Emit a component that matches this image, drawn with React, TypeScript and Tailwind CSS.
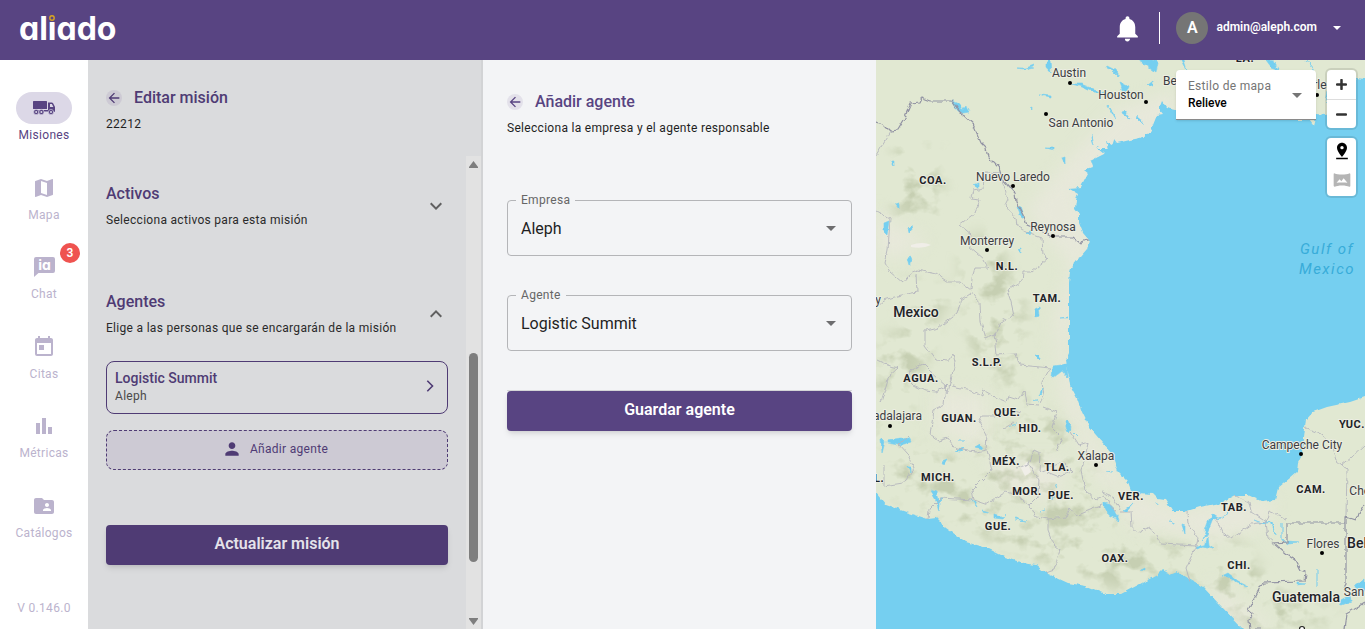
import React, { useState } from 'react';
import {
  MdArrowBack,
  MdBarChart,
  MdExpandLess,
  MdExpandMore,
  MdFolderShared,
  MdMap,
  MdNotifications,
  MdPerson,
  MdPinDrop,
  MdToday,
  MdVrpano,
} from 'react-icons/md';

function TruckIcon() {
  return (
    <svg width="23" height="14" viewBox="0 0 23 14" fill="currentColor" aria-hidden="true">
      <rect x="0" y="0" width="14" height="8" rx="0.6" />
      <path d="M15 1.5h3.8c.6 0 1 .3 1.300.8l1.700 3.200.2.500v4.800h-1.400a2.600 2.600 0 0 0-5 0H15z" />
      <path d="M17 3h1.900l1.500 3H17z" fill="#dcd8e7" />
      <path d="M1 9h14v1.500H1z" />
      <g stroke="#dcd8e7" strokeWidth="0.6">
        <circle cx="3.200" cy="11" r="2.600" />
        <circle cx="8.400" cy="11" r="2.600" />
        <circle cx="18" cy="11" r="2.600" />
      </g>
      <g fill="#dcd8e7">
        <circle cx="3.200" cy="11" r="1" />
        <circle cx="8.400" cy="11" r="1" />
        <circle cx="18" cy="11" r="1" />
      </g>
    </svg>
  );
}

function ChatIaIcon() {
  return (
    <svg width="21" height="20" viewBox="0 0 21 20" aria-hidden="true">
      <path d="M2 0h17a2 2 0 0 1 2 2v12a2 2 0 0 1-2 2H4.500L0 20V2a2 2 0 0 1 2-2z" fill="currentColor" />
      <text x="10.500" y="13" textAnchor="middle" className="fill-white font-[Inter] text-[14px] font-bold [font-feature-settings:'cv11']">ia</text>
    </svg>
  );
}

function Caret({ className }: { className: string }) {
  return (
    <svg width="10" height="5" viewBox="0 0 10 5" className={className} aria-hidden="true">
      <path d="M0 0h10L5 5z" fill="currentColor" />
    </svg>
  );
}

const NAV = [
  { label: 'Misiones', icon: <TruckIcon />, active: true },
  { label: 'Mapa', icon: <MdMap size={24} /> },
  { label: 'Chat', icon: <ChatIaIcon />, badge: 3 },
  { label: 'Citas', icon: <MdToday size={24} /> },
  { label: 'Métricas', icon: <MdBarChart size={24} /> },
  { label: 'Catálogos', icon: <MdFolderShared size={24} /> },
];

function Header() {
  return (
    <header className="flex h-15 shrink-0 items-center justify-between bg-[#584482] pl-[19px] pr-6 text-white">
      <a href="#" className="relative mb-0.5 block font-[Inter] text-[32px] font-bold leading-[50px] [font-feature-settings:'cv11']">
        aliado
        <svg width="8" height="8" viewBox="0 0 8 8" className="absolute left-[29px] top-[10px]" aria-hidden="true">
          <rect width="8" height="8" fill="#584482" />
          <circle cx="4" cy="4" r="2.200" fill="none" stroke="#d9a520" strokeWidth="1.400" />
        </svg>
      </a>
      <div className="flex items-center pb-1">
        <button type="button" aria-label="Notificaciones">
          <MdNotifications size={31} />
        </button>
        <span className="ml-4 h-8 w-px bg-white" />
        <button type="button" className="ml-4 flex items-center text-xs font-semibold">
          <span className="flex size-8 items-center justify-center rounded-full bg-[#757575] text-base font-semibold">A</span>
          <span className="mb-0.5 ml-2">admin@aleph.com</span>
          <svg width="8" height="4" viewBox="0 0 8 4" className="ml-4" aria-hidden="true">
            <path d="M0 0h8L4 4z" fill="currentColor" />
          </svg>
        </button>
      </div>
    </header>
  );
}

function Sidebar() {
  return (
    <aside className="flex w-22 shrink-0 flex-col bg-white text-xs">
      <nav className="flex flex-1 flex-col items-center justify-between pt-8">
        {NAV.map((n) => (
          <a key={n.label} href="#" className={`flex flex-col items-center ${n.active ? 'text-[#584482]' : 'text-[#bbb3cd]'}`}>
            <span className={`relative flex h-8 w-14 items-center justify-center rounded-full ${n.active ? 'bg-[#dcd8e7]' : ''}`}>
              {n.icon}
              {n.badge && (
                <span className="absolute -right-2 -top-2 flex size-5 items-center justify-center rounded-full bg-[#ef5350] font-semibold text-white">
                  {n.badge}
                </span>
              )}
            </span>
            <span className="mt-[3px] leading-4 tracking-wide">{n.label}</span>
          </a>
        ))}
      </nav>
      <p className="pb-[13px] pt-[59px] text-center leading-4 tracking-wide text-[#bbb3cd]">V 0.146.0</p>
    </aside>
  );
}

function PanelTitle({ title, subtitle, circle }: { title: string; subtitle: string; circle: string }) {
  return (
    <div>
      <div className="flex items-center gap-3">
        <button type="button" aria-label="Volver" className={`flex size-4 items-center justify-center rounded-full ${circle}`}>
          <MdArrowBack size={16} />
        </button>
        <h2 className="text-base font-medium leading-6">{title}</h2>
      </div>
      <p className="mt-1 text-xs leading-5 tracking-wide text-[#1f1f1f]">{subtitle}</p>
    </div>
  );
}

function Section({ title, subtitle, open }: { title: string; subtitle: string; open?: boolean }) {
  return (
    <button type="button" aria-expanded={!!open} className="flex w-full items-center justify-between text-left">
      <span className="flex flex-col">
        <span className="text-base font-medium leading-6">{title}</span>
        <span className="mt-1 text-xs leading-5 tracking-wide text-[#2a2a2a]">{subtitle}</span>
      </span>
      <span className="text-[#606060]">{open ? <MdExpandLess size={24} /> : <MdExpandMore size={24} />}</span>
    </button>
  );
}

function MissionPanel() {
  return (
    <section className="flex w-[395px] shrink-0 flex-col border-r-2 border-[#d2d3d5] bg-[#dadbdd] text-[#4f3b74]">
      <div className="h-24 px-[18px] pt-[26px]">
        <PanelTitle title="Editar misión" subtitle="22212" circle="bg-[#cdcad4]" />
      </div>
      <div className="flex min-h-0 flex-1">
        <div className="flex-1 px-[18px] pt-[26px]">
          <Section title="Activos" subtitle="Selecciona activos para esta misión" />
          <div className="mt-[60px]">
            <Section title="Agentes" subtitle="Elige a las personas que se encargarán de la misión" open />
          </div>
          <button type="button" className="mt-[23px] flex w-full items-center justify-between rounded-lg border border-[#4f3b74] pb-[9px] pl-2 pr-[13px] pt-1.5 text-left">
            <span className="flex flex-col">
              <span className="text-sm font-medium leading-5">Logistic Summit</span>
              <span className="text-xs leading-4 tracking-wide text-[#4a4a4a]">Aleph</span>
            </span>
            <svg width="8" height="12" viewBox="0 0 8 12" fill="none" stroke="currentColor" strokeWidth="1.600" aria-hidden="true">
              <path d="M1.300.8 6.500 6l-5.200 5.200" />
            </svg>
          </button>
          <button type="button" className="mt-4 flex h-10 w-full items-center justify-center gap-2 rounded-lg border border-dashed border-[#4f3b74] bg-[#cdcad4] pb-0.5 pr-1 text-xs tracking-wide">
            <MdPerson size={20} />
            Añadir agente
          </button>
          <button type="button" className="mt-[55px] h-10 w-full rounded bg-[#4f3b74] pb-0.5 text-base font-semibold text-[#e4e2ea] shadow-md">
            Actualizar misión
          </button>
        </div>
        <div className="flex w-[15px] flex-col items-center bg-[#e2e2e2] text-[#7e7e7e]">
          <svg width="9" height="7" viewBox="0 0 9 7" className="mt-[5px]" aria-hidden="true">
            <path d="M4.500 0 9 6v1H0V6z" fill="currentColor" />
          </svg>
          <div className="grow-[185]" />
          <div className="w-[9px] grow-[209] rounded-full bg-current" />
          <div className="grow-[56]" />
          <svg width="9" height="7" viewBox="0 0 9 7" className="mb-1" aria-hidden="true">
            <path d="M4.500 7 9 1V0H0v1z" fill="currentColor" />
          </svg>
        </div>
      </div>
    </section>
  );
}

interface FieldProps {
  id: string;
  label: string;
  options: string[];
}

function OutlinedSelect({ id, label, options }: FieldProps) {
  const [value, setValue] = useState(options[0]);
  return (
    <div className="relative">
      <label htmlFor={id} className="absolute -top-2 left-[9px] bg-[#f3f4f6] px-[5px] text-xs leading-4 tracking-wide text-[#666]">
        {label}
      </label>
      <select
        id={id}
        value={value}
        onChange={(e) => setValue(e.target.value)}
        className="h-14 w-full appearance-none rounded border border-[#b4b5b8] bg-transparent pl-[13px] pr-10 pt-0.5 text-base text-[#1f1f1f]"
      >
        {options.map((o) => <option key={o}>{o}</option>)}
      </select>
      <Caret className="pointer-events-none absolute right-4 top-[26px] text-[#6d6d6f]" />
    </div>
  );
}

function AgentPanel() {
  return (
    <section className="flex w-[393px] shrink-0 flex-col bg-[#f3f4f6] px-6 pt-[30px] text-[#584482]">
      <PanelTitle title="Añadir agente" subtitle="Selecciona la empresa y el agente responsable" circle="bg-[#e3e1ea]" />
      <form className="mt-[62px] flex flex-col gap-[39px]" onSubmit={(e) => e.preventDefault()}>
        <OutlinedSelect id="empresa" label="Empresa" options={['Aleph']} />
        <OutlinedSelect id="agente" label="Agente" options={['Logistic Summit']} />
        <div className="border-t border-[#d5d6d8]">
          <button type="submit" className="h-10 w-full rounded bg-[#584482] pb-0.5 text-base font-semibold text-white shadow-md">
            Guardar agente
          </button>
        </div>
      </form>
    </section>
  );
}

type Label = [string, number, number];

const CITIES: Label[] = [
  ['Austin', 193, 17], ['Houston', 245, 39], ['Be', 294, 25], ['San Antonio', 205, 67], ['Nuevo Laredo', 137, 121],
  ['Monterrey', 111, 185], ['Reynosa', 177, 171], ['Guadalajara', 14, 360], ['Xalapa', 220, 400],
  ['Campeche City', 426, 389], ['Flores', 447, 488], ['New Orleans', 436, 29], ['Chetumal', 499, 435], ['y', 2, 244],
  ['San', 478, 536],
];
const STATES: Label[] = [
  ['COA.', 57, 124], ['N.L.', 131, 210], ['TAM.', 171, 242], ['S.L.P.', 111, 306], ['AGUA.', 45, 322],
  ['GUAN.', 83, 362], ['QUE.', 131, 356], ['HID.', 154, 372], ['MÉX.', 130, 405], ['TLA.', 181, 411],
  ['MICH.', 62, 421], ['MOR.', 151, 435], ['PUE.', 185, 439], ['GUE.', 122, 470], ['L.', 3, 422],
  ['VER.', 255, 440], ['OAX.', 239, 502], ['TAB.', 358, 451], ['CAM.', 435, 433], ['YUC.', 476, 368],
  ['CHI.', 363, 509], ['LA.', 369, 2],
];
const COUNTRIES: Label[] = [['Mexico', 40, 257], ['Guatemala', 430, 542], ['Belize', 490, 488]];
const DOTS = [
  [194, 23], [270, 42], [170, 54], [137, 126], [111, 190], [177, 176], [14, 366], [220, 405], [425, 394], [446, 493], [441, 35],
];

const GULF =
  'M500 19 489 19 480 18 474 30 466 38 459 50 450 55 440 54 437 65 433 60 420 60 400 56 370 50 330 52 299 49 290 47 286 41 283 49 287 54 281 55 277 65 274 73 264 78 254 80 241 83 238 79 236 85 230 82 232 89 222 89 228 94 214 101 216 107 207 110 212 114 205 127 192 128 202 134 200 140 199 148 203 153 203 163 207 173 213 180 211 190 205 197 197 202 194 212 193 223 193 285 193 293 190 300 192 312 194 325 201 338 206 352 214 368 226 382 236 393 242 412 252 422 255 430 261 433 277 434 282 439 289 440 296 451 311 451 324 447 344 443 359 435 372 435 387 442 399 440 402 428 414 418 421 412 422 402 427 392 428 378 430 360 437 352 451 347 474 342 489 337 500 334Z';
const PACIFIC =
  'M-5 428 0 433 10 445 30 452 52 459 60 458 70 468 90 482 110 488 128 497 147 503 160 505 170 513 192 523 210 526 230 534 245 534 264 524 281 515 286 510 294 515 301 512 311 518 327 527 344 545 367 569 370 580 -5 580Z';
const LAKES = [
  'M141 8l8 1 8-2 1-2-8 3zM171 0v8l4 5-1-13zM230 8l7 3 6 6-4-7-8-4zM163 35l6 2 5 1v-2l-9-1zM196 24l10 3 11 5 14 1-14-4-12-5z',
  'M76 41l6 10 5 2-3-8zM86 50l4-5 1 4 2 3-6 1zM15 101l3 5v-5zM154 48l2 2v-3zM97 125l5 3v-5zM20 144l3 4v-5zM170 88l8 2v-2zM186 98l3 6v-7z',
  'M8 163l5-2-2 13-3-3zM32 168l3-3 1 5-3 3zM31 198l5-1 1 5-4 3zM141 147l4 10 3 2-4-13zM150 172l6-1-2 5zM141 189l4 3v-4zM159 249l4-2 1 9-5 1z',
  'M184 258l8-1v1zM11 380l22-3 2 5-12 3-12-2zM5 378l4 4-3 11zM31 407l3 5v-5zM66 402l5-2-3 5zM78 391l10-3-3 4zM83 381l5 0zM99 387l5-3 2 5zM54 430l7 2 2 8 5-3-5 5v9l-3-11z',
  'M95 440l6 7-3-6zM118 455l10 3 2-4-3 5-9-1zM138 458l12 3-11-2zM105 450l8 2-7-1zM160 295l4 4v-4zM177 306l14-2 1 14-6-7-10 8zM166 333l-3 3 3-8zM158 339l4 3zM133 367l7-2zM189 362l3 11 3-5-3-7zM197 372l5 5-5-5z',
  'M228 443l8 2 6 15-9-5-5-9zM230 411l7 1-6-1zM179 424l2 4zM164 452l5-2zM176 440l2-6zM248 451l10-8-7 8zM306 465l3 9v-8zM293 461l6 2zM279 442l4 2z',
  'M327 480l3-12 5-14 6 4 7-1 8-10-9 11-10 1-7 18zM319 487l10-1 3-9 1 9 5 3-11-2-7 3zM346 516l6-3 10 8 10 5-12-3-8-7zM265 510l4-2v3zM378 460l10 4 8-2 3 13-5-13-8 1zM406 480v-16 15l6 6zM411 481l12 1-12 1zM441 510v17-16zM463 541l11-6 1 6-10 4zM478 526l11-7v12l-10-3zM421 523l8 1-8 1z',
  'M244 22l6 16 3-12zM262 0l10 6 8 6 2-10-12-4zM306 0l5 10-3-10zM390 0l6 8 6 2-5-9zM430 0l7 9 4 12-5-13zM452 32l10 4-4 10-8-5zM247 50l7 9-8-6zM262 55l6 10-7-7zM277 20l-5 4 5 2zM215 75l2 10-2-7zM220 90l2-4zM232 46l6 7 2 6-5-8z',
];
const STATE_LINES =
  'M15 71 0 95M0 151 14 159 12 190 9 203 14 212 27 223 36 212 42 210 60 214 72 222 84 222 95 230 96 218 99 208 112 208 107 198 93 186 95 175 83 165 99 153 104 140 95 139 97 130 108 128 110 112 125 113M40 214 41 232 22 236 8 240 0 247M97 232 85 240 81 253 62 268 49 271 49 285 60 300 72 301 77 294 79 302 74 324 71 334 70 325 68 345 58 350 54 375 62 381 72 378 80 389 100 392 110 390 111 375 103 362 106 356 122 356 133 348 145 352M97 234 104 243 105 262 110 278 119 274 121 285M125 113 132 140 129 146 140 158 141 166 155 174 166 178 167 195 172 198 155 212 147 212 146 221 131 230 135 242 138 255 124 262 119 275M119 285 120 295 140 294 144 305 174 308 166 323 168 335 163 345 150 344 148 331 142 339 133 336 131 342 121 338 107 330 106 337 95 330 76 326M71 326 60 332 50 331 37 325 30 318 36 309 47 304 55 312 62 318 71 326M0 300 8 304 22 308 13 316 5 342M168 347 181 352 176 368 186 378 181 390M194 371 203 385 212 382 210 395 205 410 209 430 220 440 228 435 240 452M127 369 137 363M111 390 116 410 96 430 98 440 110 444 130 432 141 435 153 445 162 436 163 420 153 404 141 408M153 404 158 390 164 393 163 412 175 407 187 402 197 412 181 416 171 412M52 459 53 450 65 438 97 440M33 375 23 385 32 395 38 408 27 423 8 426 8 405M153 445 160 457 172 459 172 470 178 485 184 490 178 510 170 513M172 459 190 457 194 448 200 456 226 445M244 452 255 452 256 467 263 473 274 467 285 484 320 486 322 478 312 464 311 451M320 486 310 508 314 522M340 458 346 472 355 479 365 472 376 464 390 462 393 451 411 459M359 435 373 442 375 452 390 462 392 478 397 482M430 368 445 374 455 385 460 400 471 409 470 456M466 405 475 398 489 385M226 432 236 436 244 450';
const BORDERS =
  'M0 62 7 64 14 71 22 70 28 60 35 43 44 42 46 38 54 41 76 41 84 52 97 64 105 83 110 88 112 97 123 108 126 118 134 127 139 133 140 142 147 155 151 165 163 170 177 177 196 177 205 184 207 181 213 180M386 569 374 569 373 560 376 553 372 550 387 522 429 521 430 512 424 510 419 500 410 494 397 483 411 482 411 463 470 463 470 457 479 460 489 444M470 463 470 525 467 530M489 543 470 554 468 569';

function MapView() {
  return (
    <div className="relative min-w-0 flex-1 overflow-hidden bg-[#e1e8d2]">
      <svg viewBox="0 0 489 569" preserveAspectRatio="xMaxYMid slice" className="absolute inset-0 size-full font-[Roboto]" role="img" aria-label="Mapa">
        <defs>
          <filter id="rough" x="0" y="0" width="100%" height="100%" colorInterpolationFilters="sRGB">
            <feTurbulence type="fractalNoise" baseFrequency="0.15" numOctaves="2" seed="4" />
            <feDisplacementMap in="SourceGraphic" scale="5" xChannelSelector="R" yChannelSelector="G" />
          </filter>
          <filter id="relief" x="0" y="0" width="100%" height="100%" colorInterpolationFilters="sRGB">
            <feTurbulence type="fractalNoise" baseFrequency="0.035 0.045" numOctaves="4" seed="9" result="n" />
            <feColorMatrix in="n" values="0 0 0 0 0.720  0 0 0 0 0.760  0 0 0 0 0.630  5 0 0 0 -2.500" result="c" />
            <feGaussianBlur in="SourceAlpha" stdDeviation="8" result="b" />
            <feComposite in="c" in2="b" operator="in" />
          </filter>
          <filter id="soft" colorInterpolationFilters="sRGB"><feGaussianBlur stdDeviation="8" /></filter>
        </defs>
        <rect width="489" height="569" fill="#e1e8d2" />
        <g filter="url(#soft)" fill="#e7e8da">
          <path d="M200 90 240 50 300 30 300 90 200 130 215 180 190 290 215 370 250 430 225 425 185 340 178 260 195 205 150 150z" />
          <path d="M0 150 30 170 50 180 20 200 0 190zM60 330 110 335 110 390 60 370zM244 425 300 450 400 440 390 465 340 480 250 465z" />
          <path d="M110 400 190 400 180 440 130 430zM330 520 400 569 350 569z" />
        </g>
        <g filter="url(#relief)" opacity="0.650">
          <path d="M20 80 60 90 70 160 20 160zM100 170 125 190 150 250 145 330 190 370 220 420 225 450 300 490 360 480 400 530 470 560 380 569 310 515 240 530 160 500 60 455 10 430 20 380 90 400 150 350 95 290 85 200z" />
          <path d="M0 280 60 260 40 340 0 400zM20 220 80 230 40 290z" />
        </g>
        <path d="M35 185q12-4 20 0-8 4-20 2zM145 408l6-6 4 10-6 4z" fill="#f0eee8" />
        <g filter="url(#rough)">
          <path d={GULF} fill="#75cff0" />
          <path d={PACIFIC} fill="#75cff0" />
          {LAKES.map((d) => <path key={d} d={d} fill="#75cff0" stroke="#75cff0" strokeWidth="0.600" />)}
          <path d={STATE_LINES} fill="none" stroke="#b4b5bd" strokeWidth="0.900" />
          <path d={BORDERS} fill="none" stroke="#9293a3" strokeWidth="1.200" />
        </g>
        {DOTS.map(([x, y]) => <circle key={x} cx={x} cy={y} r="2" fill="#000" />)}
        <circle cx="426" cy="569" r="2.500" fill="#fff" stroke="#222" strokeWidth="1.200" />
        <g textAnchor="middle" strokeLinejoin="round" className="[paint-order:stroke]" stroke="#eceee2" strokeWidth="2">
          {CITIES.map(([t, x, y]) => <text key={t} x={x} y={y} className="text-xs" fill="#3c3d42">{t}</text>)}
          {STATES.map(([t, x, y]) => <text key={t} x={x} y={y} className="text-[11px] font-bold tracking-wider" fill="#222328">{t}</text>)}
          {COUNTRIES.map(([t, x, y]) => <text key={t} x={x} y={y} className="text-sm font-medium" fill="#222328">{t}</text>)}
        </g>
        <g textAnchor="middle" fill="#38acd9" className="text-[15px] italic tracking-widest">
          <text x="451" y="194">Gulf of</text>
          <text x="451" y="214">Mexico</text>
        </g>
      </svg>
      <div className="absolute right-[9px] top-[10px] flex items-start gap-[11px]">
        <div className="relative rounded-t border-b border-[#8a8a8a] bg-white shadow">
          <label htmlFor="estilo" className="pointer-events-none absolute left-3 top-2 text-xs leading-4 tracking-wide text-[#757575]">
            Estilo de mapa
          </label>
          <select id="estilo" className="h-[49px] w-[140px] appearance-none pl-3 pr-8 pt-4 text-xs font-medium text-black">
            <option>Relieve</option>
            <option>Satélite</option>
          </select>
          <Caret className="pointer-events-none absolute right-[14px] top-[23px] text-[#757575]" />
        </div>
        <div className="flex flex-col gap-[10px] text-black">
          <div className="flex flex-col rounded bg-white shadow-[0_0_0_2px_rgba(0,0,0,0.1)]">
            <button type="button" aria-label="Acercar" className="flex size-[29px] items-center justify-center">
              <svg width="11" height="11" viewBox="0 0 11 11"><path d="M5.500 1v9M1 5.500h9" stroke="#333" strokeWidth="2.500" strokeLinecap="round" /></svg>
            </button>
            <button type="button" aria-label="Alejar" className="flex size-[29px] items-center justify-center border-t border-[#ddd]">
              <svg width="11" height="11" viewBox="0 0 11 11"><path d="M1 5.500h9" stroke="#333" strokeWidth="2.500" strokeLinecap="round" /></svg>
            </button>
          </div>
          <div className="flex flex-col rounded bg-white shadow-[0_0_0_2px_rgba(0,0,0,0.1)]">
            <button type="button" aria-label="Ver ubicación" className="flex size-[29px] items-center justify-center pb-[3px]">
              <MdPinDrop size={20} />
            </button>
            <button type="button" aria-label="Panorama" className="flex size-[29px] items-center justify-center pb-[3px] text-[#b5b5b5]">
              <MdVrpano size={20} />
            </button>
          </div>
        </div>
      </div>
    </div>
  );
}

export default function App() {
  return (
    <div className="flex h-screen flex-col overflow-hidden font-[Roboto,sans-serif]">
      <Header />
      <main className="flex min-h-0 flex-1">
        <Sidebar />
        <MissionPanel />
        <AgentPanel />
        <MapView />
      </main>
    </div>
  );
}
